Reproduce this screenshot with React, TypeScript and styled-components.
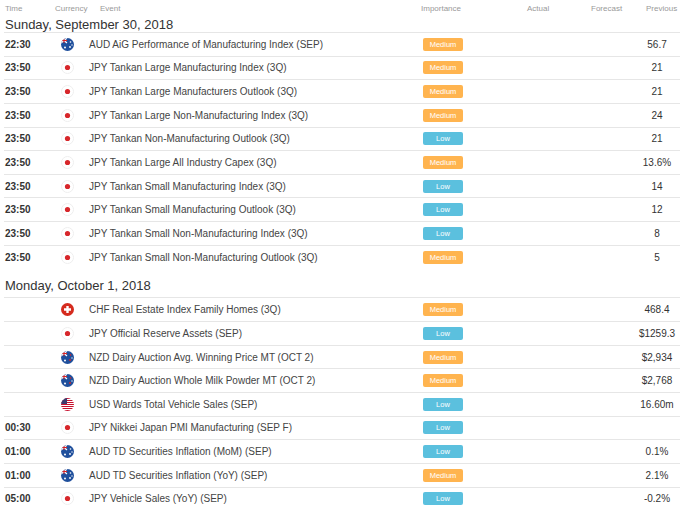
import React from "react";
import styled, { createGlobalStyle } from "styled-components";

const Global = createGlobalStyle`
  body { margin: 0; background: #fff; font-family: "Liberation Sans", Arial, sans-serif; color: #333; overflow: hidden; }
`;
const Page = styled.div` width: 680px; height: 513px; overflow: hidden; `;
const Head = styled.div` display: flex; height: 17px; align-items: center; font-size: 8px; color: #999; `;
const HeadCell = styled.span<{ $w: number }>` width: ${p => p.$w}px; flex: none; `;
const DateTitle = styled.div<{ $mb: number }>` font-size: 13px; padding-left: 5px; height: 15px; line-height: 15px; margin-bottom: ${p => p.$mb}px; color: #333;`;
const Row = styled.div` display: grid; grid-template-columns: 46px 34px 330px 58px 142px 1fr; height: 23.65px; align-items: center;
  border-top: 1px solid #e6e6e6; margin-left: 4px; box-sizing: border-box; font-size: 10px;`;
const Time = styled.span` font-weight: bold; padding-left: 1px; font-size: 10px; color: #333;`;
const Flag = styled.span` display: flex; justify-content: center; `;
const Event = styled.span` white-space: nowrap; color: #444; padding-left: 5px;`;
const BadgeCell = styled.span` display: flex; justify-content: center; `;
const Badge = styled.span<{ $low: boolean }>` width: 40px; height: 13px; border-radius: 2px; font-size: 7.5px; color: #fff;
  display: flex; align-items: center; justify-content: center; background: ${p => p.$low ? "#5bc0de" : "#ffb44f"};`;
const Prev = styled.span` text-align: center; white-space: nowrap; padding-left: 20px; color: #333;`;
const Spacer = styled.div<{ $h: number }>` height: ${p => p.$h}px; `;

function FlagIcon({ c }: { c: string }) {
  if (c === "JPY") return <svg width="13" height="13" viewBox="0 0 13 13"><circle cx="6.5" cy="6.5" r="6" fill="#fff" stroke="#eee"/><circle cx="6.5" cy="6.5" r="2.6" fill="#d7262a"/></svg>;
  if (c === "CHF") return <svg width="13" height="13" viewBox="0 0 13 13"><circle cx="6.5" cy="6.5" r="6.5" fill="#d52b1e"/><path d="M5.3 3h2.4v2.3H10v2.4H7.7V10H5.3V7.7H3V5.3h2.3z" fill="#fff"/></svg>;
  if (c === "USD") return <svg width="13" height="13" viewBox="0 0 13 13"><clipPath id="u"><circle cx="6.5" cy="6.5" r="6.5"/></clipPath><g clipPath="url(#u)"><rect width="13" height="13" fill="#fff"/>{[0,2,4,6,8,10,12].map(y=><rect key={y} y={y} width="13" height="1" fill="#c8102e"/>)}<rect width="6" height="6" fill="#3c3b6e"/></g></svg>;
  return <svg width="13" height="13" viewBox="0 0 13 13"><clipPath id={"a"+c}><circle cx="6.5" cy="6.5" r="6.5"/></clipPath><g clipPath={`url(#a${c})`}><rect width="13" height="13" fill="#1f4f9c"/><path d="M0 0L6 5M6 0L0 5" stroke="#fff" strokeWidth="1.2"/><path d="M3 0v5M0 2.5h6" stroke="#d22" strokeWidth="1"/><circle cx="9.5" cy="4" r=".8" fill={c==="NZD"?"#d22":"#fff"}/><circle cx="9" cy="9" r=".9" fill={c==="NZD"?"#d22":"#fff"}/><circle cx="4" cy="9.5" r="1" fill="#fff"/><circle cx="11" cy="7" r=".7" fill="#fff"/></g></svg>;
}

type R = [string, string, string, boolean, string];
const sun: R[] = [
  ["22:30","AUD","AUD AiG Performance of Manufacturing Index (SEP)",false,"56.7"],
  ["23:50","JPY","JPY Tankan Large Manufacturing Index (3Q)",false,"21"],
  ["23:50","JPY","JPY Tankan Large Manufacturers Outlook (3Q)",false,"21"],
  ["23:50","JPY","JPY Tankan Large Non-Manufacturing Index (3Q)",false,"24"],
  ["23:50","JPY","JPY Tankan Non-Manufacturing Outlook (3Q)",true,"21"],
  ["23:50","JPY","JPY Tankan Large All Industry Capex (3Q)",false,"13.6%"],
  ["23:50","JPY","JPY Tankan Small Manufacturing Index (3Q)",true,"14"],
  ["23:50","JPY","JPY Tankan Small Manufacturing Outlook (3Q)",true,"12"],
  ["23:50","JPY","JPY Tankan Small Non-Manufacturing Index (3Q)",true,"8"],
  ["23:50","JPY","JPY Tankan Small Non-Manufacturing Outlook (3Q)",false,"5"],
];
const mon: R[] = [
  ["","CHF","CHF Real Estate Index Family Homes (3Q)",false,"468.4"],
  ["","JPY","JPY Official Reserve Assets (SEP)",true,"$1259.3"],
  ["","NZD","NZD Dairy Auction Avg. Winning Price MT (OCT 2)",false,"$2,934"],
  ["","NZD","NZD Dairy Auction Whole Milk Powder MT (OCT 2)",false,"$2,768"],
  ["","USD","USD Wards Total Vehicle Sales (SEP)",true,"16.60m"],
  ["00:30","JPY","JPY Nikkei Japan PMI Manufacturing (SEP F)",true,""],
  ["01:00","AUD","AUD TD Securities Inflation (MoM) (SEP)",true,"0.1%"],
  ["01:00","AUD","AUD TD Securities Inflation (YoY) (SEP)",false,"2.1%"],
  ["05:00","JPY","JPY Vehicle Sales (YoY) (SEP)",true,"-0.2%"],
];

const Rows = ({ data }: { data: R[] }) => <>{data.map((r, i) => (
  <Row key={i}><Time>{r[0]}</Time><Flag><FlagIcon c={r[1]} /></Flag><Event>{r[2]}</Event><BadgeCell><Badge $low={r[3]}>{r[3] ? "Low" : "Medium"}</Badge></BadgeCell><span /><Prev>{r[4]}</Prev></Row>
))}</>;

export default function App() {
  return <Page><Global />
    <Head>
      <HeadCell $w={50} style={{ paddingLeft: 5 }}>Time</HeadCell>
      <HeadCell $w={45}>Currency</HeadCell>
      <HeadCell $w={321}>Event</HeadCell>
      <HeadCell $w={106}>Importance</HeadCell>
      <HeadCell $w={64}>Actual</HeadCell>
      <HeadCell $w={55}>Forecast</HeadCell>
      <HeadCell $w={39}>Previous</HeadCell>
    </Head>
    <DateTitle $mb={0}>Sunday, September 30, 2018</DateTitle>
    <Rows data={sun} />
    <Spacer $h={10} />
    <DateTitle $mb={4}>Monday, October 1, 2018</DateTitle>
    <Rows data={mon} />
  </Page>;
}
